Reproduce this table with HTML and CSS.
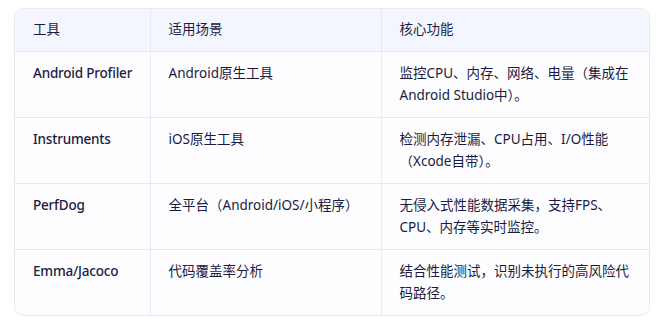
FILE: index.html
```html
<!DOCTYPE html>
<html lang="zh-CN">
<head>
<meta charset="utf-8">
<link rel="stylesheet" href="styles.css">
</head>
<body>
<div class="table-wrap">
  <table class="tbl">
    <colgroup>
      <col class="c1"><col class="c2"><col class="c3">
    </colgroup>
    <thead>
      <tr><th>工具</th><th>适用场景</th><th>核心功能</th></tr>
    </thead>
    <tbody>
      <tr><td class="name">Android Profiler</td><td>Android原生工具</td><td>监控CPU、内存、网络、电量（集成在Android Studio中）。</td></tr>
      <tr><td class="name">Instruments</td><td>iOS原生工具</td><td>检测内存泄漏、CPU占用、I/O性能（Xcode自带）。</td></tr>
      <tr><td class="name">PerfDog</td><td>全平台（Android/iOS/小程序）</td><td>无侵入式性能数据采集，支持FPS、CPU、内存等实时监控。</td></tr>
      <tr><td class="name">Emma/Jacoco</td><td>代码覆盖率分析</td><td>结合性能测试，识别未执行的高风险代码路径。</td></tr>
    </tbody>
  </table>
</div>
</body>
</html>
```

FILE: styles.css
```css
html, body {
  margin: 0;
  padding: 0;
  background: #ffffff;
}
body {
  padding: 8px 18px 0 14px;
  font-family: "Noto Sans", "Noto Sans CJK SC", sans-serif;
  color: #1b1b3f;
}
.table-wrap {
  width: 636px;
  border: 1px solid #e7e9f2;
  border-radius: 10px;
  overflow: hidden;
  box-sizing: border-box;
  background: #fdfdff;
}
.tbl {
  width: 100%;
  border-collapse: collapse;
  table-layout: fixed;
  font-size: 13.5px;
  line-height: 22.5px;
}
.c1 { width: 135px; }
.c2 { width: 231px; }
.c3 { width: auto; }
.tbl th, .tbl td {
  text-align: left;
  vertical-align: top;
  padding: 10px 18px 10px 18px;
  border-left: 1px solid #e7e9f2;
  border-top: 1px solid #e7e9f2;
}
.tbl th:first-child, .tbl td:first-child {
  border-left: none;
  padding-right: 6px;
}
.tbl thead th {
  border-top: none;
  background: #f3f6ff;
  font-weight: 400;
  padding-top: 9px;
  padding-bottom: 10px;
}
.tbl td.name {
  font-weight: 500;
  letter-spacing: -0.2px;
  white-space: nowrap;
}
```
